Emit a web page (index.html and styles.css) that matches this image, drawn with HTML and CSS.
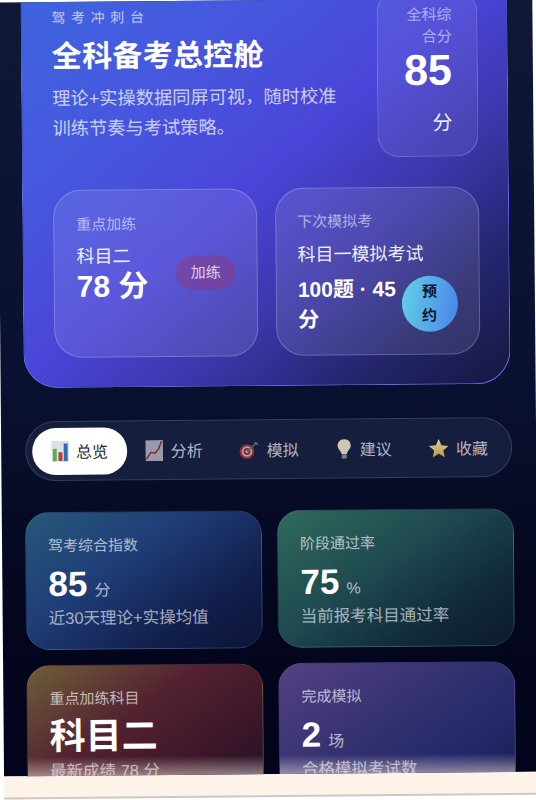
FILE: index.html
```html
<!DOCTYPE html>
<html lang="zh-CN">
<head>
<meta charset="utf-8">
<title>驾考冲刺台</title>
<link rel="stylesheet" href="styles.css">
</head>
<body>
<div class="sheet">
  <main class="screen">
    <section class="hero">
      <div class="hero-top">
        <div class="hero-copy">
          <p class="eyebrow">驾考冲刺台</p>
          <h1 class="title">全科备考总控舱</h1>
          <p class="lead">理论+实操数据同屏可视，随时校准训练节奏与考试策略。</p>
        </div>
        <div class="score-tile">
          <p class="score-label">全科综合分</p>
          <p class="score-value">85</p>
          <p class="score-unit">分</p>
        </div>
      </div>
      <div class="hero-cards">
        <article class="glass glass-left">
          <p class="glass-label">重点加练</p>
          <div class="glass-row">
            <div class="glass-text">
              <p class="glass-name">科目二</p>
              <p class="glass-score">78 分</p>
            </div>
            <span class="pill-train">加练</span>
          </div>
        </article>
        <article class="glass glass-right">
          <p class="glass-label">下次模拟考</p>
          <p class="glass-name">科目一模拟考试</p>
          <div class="glass-row exam-row">
            <p class="glass-meta">100题 · 45 分</p>
            <span class="book">预约</span>
          </div>
        </article>
      </div>
    </section>

    <nav class="tabs">
      <a class="tab tab-active">
        <svg class="ico" viewBox="0 0 20 24"><rect width="20" height="24" fill="#d9e0e6"/><rect x="1.5" y="9" width="4.5" height="14" fill="#58b04a"/><rect x="8" y="13" width="4.5" height="10" fill="#c9392c"/><rect x="14" y="3" width="4.5" height="20" fill="#2f6fb5"/></svg>
        <span>总览</span>
      </a>
      <a class="tab">
        <svg class="ico dim" viewBox="0 0 20 24"><rect width="20" height="24" fill="#c9ccd8"/><path d="M1 22 L6 14 L11 15 L15 10 L18.5 1" fill="none" stroke="#a8242c" stroke-width="1.6"/></svg>
        <span>分析</span>
      </a>
      <a class="tab">
        <svg class="ico ico-wide dim" viewBox="0 0 24 22"><circle cx="10" cy="13" r="8.5" fill="#c2303a"/><circle cx="10" cy="13" r="6" fill="#e8d8d8"/><circle cx="10" cy="13" r="4" fill="#c2303a"/><circle cx="10" cy="13" r="1.7" fill="#eee"/><path d="M10 13 L20 4" stroke="#5d7f92" stroke-width="1.6"/><path d="M18 2 L20 5 L23.5 5.5 L21 2.5 Z" fill="#5f9fc0"/></svg>
        <span>模拟</span>
      </a>
      <a class="tab">
        <svg class="ico soft" viewBox="0 0 20 24"><path d="M10 1 C4.5 1 2.5 5 2.5 8.5 C2.5 12 6.5 14 7 18 L13 18 C13.5 14 17.5 12 17.5 8.5 C17.5 5 15.5 1 10 1 Z" fill="#e6dfc6"/><rect x="7" y="18.5" width="6" height="4.5" rx="1.5" fill="#8a8a88"/></svg>
        <span>建议</span>
      </a>
      <a class="tab">
        <svg class="ico ico-wide soft" viewBox="0 0 24 24"><defs><linearGradient id="st" x1="0" y1="0" x2="0" y2="1"><stop offset="0" stop-color="#f8ecae"/><stop offset="1" stop-color="#cfa548"/></linearGradient></defs><path d="M12 1.5 L15.2 8.7 L23.2 9.5 L17.2 14.7 L19 22.5 L12 18.4 L5 22.5 L6.8 14.7 L0.8 9.5 L8.8 8.7 Z" fill="url(#st)"/></svg>
        <span>收藏</span>
      </a>
    </nav>

    <section class="stats">
      <article class="stat stat-blue">
        <p class="stat-label">驾考综合指数</p>
        <p class="stat-value">85<small>分</small></p>
        <p class="stat-sub">近30天理论+实操均值</p>
      </article>
      <article class="stat stat-green">
        <p class="stat-label">阶段通过率</p>
        <p class="stat-value">75<small>%</small></p>
        <p class="stat-sub">当前报考科目通过率</p>
      </article>
      <article class="stat stat-red">
        <p class="stat-label">重点加练科目</p>
        <p class="stat-value stat-word">科目二</p>
        <p class="stat-sub">最新成绩 78 分</p>
      </article>
      <article class="stat stat-violet">
        <p class="stat-label">完成模拟</p>
        <p class="stat-value">2<small>场</small></p>
        <p class="stat-sub">合格模拟考试数</p>
      </article>
    </section>
  </main>
  <div class="footer-band"></div>
</div>
</body>
</html>
```
FILE: styles.css
```css
* { box-sizing: border-box; }
html, body { margin: 0; height: 100%; overflow: hidden; background: #fff; }
body { font-family: "Liberation Sans", "Noto Sans CJK SC", sans-serif; color: #fff; }
p, h1 { margin: 0; }

.sheet {
  width: 535px;
  transform-origin: 0 0;
  transform: translate(-2.7px, 2.5px) rotate(-0.5deg);
}
.screen {
  height: 774px;
  overflow: hidden;
  padding: 0 0 0 23px;
  background: linear-gradient(180deg, #0f1836 0%, #0a1030 50%, #03061c 80%, #01041a 100%);
}
.footer-band {
  height: 23px;
  background: #fdf3e9;
  border-bottom: 2px solid #cdc9c4;
}

/* hero */
.hero {
  width: 487px;
  margin-top: -40px;
  padding: 32px 31px 29px 30px;
  border: 1px solid #5f6ceb;
  border-top: 0;
  border-radius: 34px;
  background:
    linear-gradient(140deg, #3d66e0 0%, #4658de 28%, #4a45d8 50%, #3a36a8 68%, #24246c 84%, #15183f 100%);
}
.hero-top { display: flex; justify-content: space-between; align-items: flex-start; }
.hero-copy { width: 292px; padding-top: 14px; }
.eyebrow { font-size: 14px; line-height: 20px; letter-spacing: 5.6px; color: rgba(255,255,255,.68); }
.title { margin-top: 9px; font-size: 30px; line-height: 40px; font-weight: 700; letter-spacing: .3px; }
.lead { margin-top: 7px; font-size: 18.25px; line-height: 30px; color: rgba(255,255,255,.72); }

.score-tile {
  width: 101px;
  height: 166px;
  padding: 13px 25px 0 20px;
  margin-right: -2px;
  text-align: right;
  border: 1px solid rgba(255,255,255,.2);
  border-top: 0;
  border-radius: 22px;
  background: rgba(255,255,255,.07);
}
.score-label { font-size: 15px; line-height: 22px; color: rgba(255,255,255,.55); }
.score-value { margin-left: -10px; font-size: 43px; line-height: 44px; font-weight: 700; }
.score-unit { margin-top: 17px; font-size: 20px; line-height: 28px; color: rgba(255,255,255,.92); }

.hero-cards { display: grid; grid-template-columns: 204px 204px; gap: 18px; margin-top: 30px; }
.glass {
  height: 168px;
  padding: 24px 21px 0 22px;
  border: 1px solid rgba(255,255,255,.22);
  border-radius: 28px;
  background: rgba(255,255,255,.1);
}
.glass-right { padding-top: 23px; padding-left: 21px; padding-right: 21px; }
.glass-label { font-size: 15px; line-height: 20px; color: rgba(255,255,255,.56); }
.glass-row { display: flex; justify-content: space-between; align-items: center; margin-top: 9px; }
.glass-name { font-size: 18px; line-height: 26px; color: rgba(255,255,255,.92); }
.glass-right .glass-name { margin-top: 10px; }
.glass-score { font-size: 30px; line-height: 34px; font-weight: 700; }
.pill-train {
  width: 60px;
  height: 34px;
  border-radius: 17px;
  text-align: center;
  font-size: 15px;
  line-height: 34px;
  color: rgba(255,255,255,.76);
  background: rgba(150,50,115,.42);
}
.exam-row { margin-top: 7px; gap: 4px; }
.glass-meta { font-size: 21px; line-height: 30px; font-weight: 700; }
.book {
  flex: none;
  width: 56px;
  height: 56px;
  display: flex;
  align-items: center;
  justify-content: center;
  padding: 0 20px;
  border-radius: 50%;
  font-size: 15px;
  line-height: 24px;
  font-weight: 700;
  color: #0b1230;
  background: linear-gradient(100deg, #62d2e8 0%, #4a82e8 100%);
}

/* tabs */
.tabs {
  display: flex;
  width: 487px;
  height: 60px;
  margin-top: 33px;
  margin-left: 1px;
  padding: 7px 6px 7px 6px;
  align-items: center;
  border: 1px solid rgba(255,255,255,.14);
  border-radius: 30px;
  background: #161e3e;
}
.tab {
  flex: 1;
  height: 47px;
  display: flex;
  align-items: center;
  justify-content: center;
  gap: 7px;
  border-radius: 24px;
  font-size: 16px;
  color: rgba(255,255,255,.68);
}
.tab-active { background: #fff; color: #222a3a; }
.ico { width: 18px; height: 21px; flex: none; }
.ico-wide { width: 21px; height: 21px; }
.dim { opacity: .72; }
.soft { opacity: .88; }

/* stats */
.stats { display: grid; grid-template-columns: 237px 237px; gap: 15px 15px; margin-top: 31px; }
.stat {
  position: relative;
  height: 138px;
  padding: 22px 21px 0 22px;
  border: 1px solid rgba(255,255,255,.08);
  border-radius: 24px;
  overflow: hidden;
}
.stat-blue { background: linear-gradient(145deg, #265878 0%, #203d78 38%, #12204e 72%, #0c1336 100%); }
.stat-green { background: linear-gradient(145deg, #2f6a5c 0%, #1f4a50 42%, #10283a 76%, #0d1a30 100%); }
.stat-red { background: linear-gradient(145deg, #6e5e38 0%, #532231 40%, #3a1628 72%, #1c1028 100%); }
.stat-violet { background: linear-gradient(145deg, #544084 0%, #33316f 45%, #23286a 72%, #181b4a 100%); }
.stat-red::after, .stat-violet::after {
  content: "";
  position: absolute;
  left: 0;
  right: 0;
  bottom: 25px;
  height: 20px;
  background: linear-gradient(180deg, rgba(255,240,230,0), rgba(255,240,230,.5));
}
.stat-label { font-size: 15px; line-height: 22px; color: rgba(255,255,255,.66); }
.stat-value { margin-top: 5px; font-size: 35px; line-height: 44px; font-weight: 700; }
.stat-value small { margin-left: 7px; font-size: 16px; line-height: 1; font-weight: 400; color: rgba(255,255,255,.66); }
.stat-word { font-size: 36px; }
.stat-sub { font-size: 16.5px; line-height: 24px; color: rgba(255,255,255,.62); }
```
